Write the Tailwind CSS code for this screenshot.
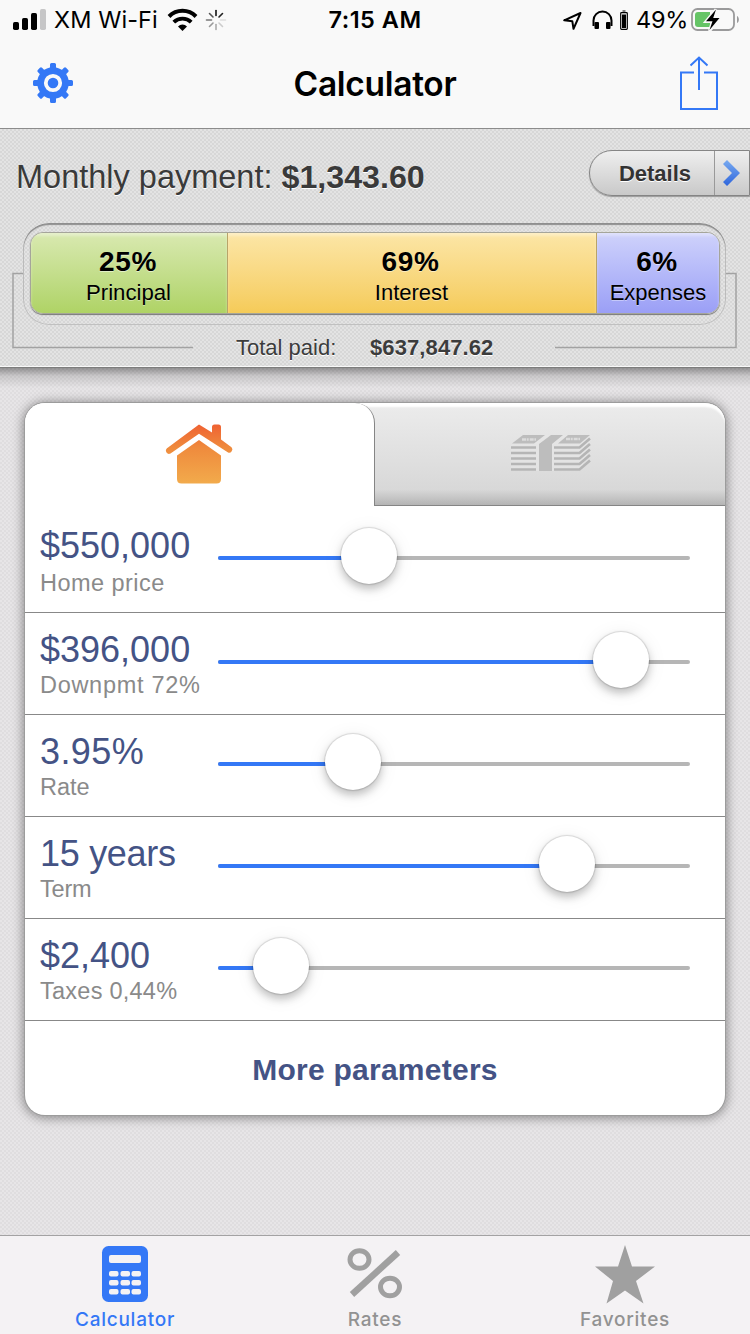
<!DOCTYPE html>
<html lang="en">
<head>
<meta charset="utf-8">
<title>Calculator</title>
<script src="https://cdn.jsdelivr.net/npm/@tailwindcss/browser@4"></script>
</head>
<body class="flex h-[1334px] w-[750px] flex-col overflow-hidden bg-[#e3e1e3] font-['Liberation_Sans',Arial,sans-serif] whitespace-nowrap">

<header class="h-[129px] shrink-0 border-b border-[#8c8c8c] bg-[#f9f9f9] font-[Inter,sans-serif] text-black">
  <div class="grid h-10 grid-cols-[1fr_auto_1fr] items-center">
    <div class="flex h-10 items-center pl-[13px]">
      <svg class="h-10 w-[34px]" viewBox="13 0 34 40"><rect x="13" y="22" width="6" height="8" rx="1.7"/><rect x="22" y="18" width="6" height="12" rx="1.7"/><rect x="31" y="13" width="6" height="17" rx="1.7"/><rect x="40" y="9" width="6" height="21" rx="1.7" fill="#c6c6c7"/></svg>
      <span class="ml-[7px] w-[105px] text-[23.500px] leading-10 tracking-[0.100px]">XM Wi-Fi</span>
      <svg class="ml-2 h-10 w-[32px]" viewBox="167 0 32 40" fill="none" stroke="#000"><path d="M169 16.500a19 19 0 0 1 27 0" stroke-width="4"/><path d="M173.800 22.200a12.200 12.200 0 0 1 17.400 0" stroke-width="3.800"/><path d="M182.500 31l-4.500-4.600a6.400 6.400 0 0 1 9 0z" fill="#000" stroke="none"/></svg>
      <svg class="ml-[6px] h-10 w-[22px]" viewBox="205 0 22 40" fill="none" stroke-width="1.600" stroke-linecap="round"><path d="M216 15.500v-5" stroke="#111"/><path d="M219 17l3.500-3.500" stroke="#222"/><path d="M220.500 20h5" stroke="#ddd"/><path d="M219 23l3.500 3.500" stroke="#ccc"/><path d="M216 24.500v5" stroke="#aaa"/><path d="M213 23l-3.500 3.500" stroke="#999"/><path d="M211.500 20h-5" stroke="#777"/><path d="M213 17l-3.500-3.500" stroke="#555"/></svg>
    </div>
    <span class="text-[23.500px] leading-10 font-semibold tracking-[0.500px]">7:15 AM</span>
    <div class="flex h-10 items-center justify-end pr-[10px]">
      <svg class="h-10 w-[70px]" viewBox="562 0 70 40"><path d="M564.200 20.300L580.500 13l-7 15.800-1.200-7.600z" fill="none" stroke="#000" stroke-width="2" stroke-linejoin="round"/><path d="M593.500 26v-5.500a9 9 0 0 1 18 0V26" fill="none" stroke="#000" stroke-width="2"/><rect x="594.500" y="22" width="4.500" height="7" rx="1"/><rect x="606" y="22" width="4.500" height="7" rx="1"/><rect x="620.700" y="12.700" width="6.600" height="16.600" rx=".8" fill="none" stroke="#000" stroke-width="1.200"/><path d="M622 14.500h4v13.500h-4zM622.500 10.500h3v1h-3z"/></svg>
      <span class="ml-1 w-[51px] text-[23.500px] leading-10 tracking-[-0.200px]">49%</span>
      <svg class="ml-[3px] h-10 w-[50px]" viewBox="690 0 50 40"><rect x="692" y="9" width="42" height="21" rx="5.500" fill="none" stroke="#9a9a9b" stroke-width="1.800"/><path d="M737 16v7c2.500-1 2.500-6 0-7z" fill="#9a9a9b"/><path d="M698 12h12v15h-12a3 3 0 0 1-3-3v-9a3 3 0 0 1 3-3z" fill="#65c466"/><path d="M716 9.500L706 21.500h6.500L709.500 31 720 18h-6.500z" stroke="#f9f9f9" stroke-width="3"/><path d="M716 9.500L706 21.200h6.500L709.500 30 719.500 18h-6.300z"/></svg>
    </div>
  </div>
  <div class="grid h-[88px] grid-cols-[1fr_auto_1fr] items-center">
    <svg class="ml-8 h-[88px] w-[42px]" viewBox="32 40 42 88"><g fill="#3478f6"><circle cx="53" cy="83" r="15.800"/><g id="teeth"><path id="tooth" d="M50 69v-4.500q0-1.500 1.500-1.500h3q1.500 0 1.500 1.500v4.500l2.500 2h-11z"/><use href="#tooth" transform="rotate(45 53 83)"/><use href="#tooth" transform="rotate(90 53 83)"/><use href="#tooth" transform="rotate(135 53 83)"/></g><use href="#teeth" transform="rotate(180 53 83)"/></g><circle cx="53" cy="83" r="7.200" fill="none" stroke="#f9f9f9" stroke-width="3.800"/></svg>
    <h1 class="text-[33.500px] leading-[88px] font-semibold tracking-[-0.300px]">Calculator</h1>
    <svg class="ml-auto mr-[30px] h-[88px] w-[42px]" viewBox="678 40 42 88" fill="none" stroke="#3478f6" stroke-width="2"><path d="M694 72.500h-13V109h36V72.500h-13M699 90V58m-8.500 7.500L699 57.500l8.500 8"/></svg>
  </div>
</header>

<section class="relative h-[239px] shrink-0 border-b border-[#7d7d7d] bg-[#dedede] bg-[repeating-conic-gradient(#d7d7d7_0_25%,#e3e3e3_0_50%)] bg-[length:4px_4px] shadow-[inset_0_-1px_0_#f8f8f8]">
  <svg class="absolute top-[143px] left-[12px] h-[78px] w-[726px]" viewBox="12 272 726 78" fill="none" stroke="#a2a2a2" stroke-width="1.500"><path d="M24 273.500H13v74h180M725 273.500h11v74H555"/></svg>
  <div class="flex h-[94px] items-center justify-between pl-4">
    <p class="pt-px text-[32.500px] leading-[40px] text-[#3a3a3a] [text-shadow:0_1px_0_#fff]">Monthly payment: <b class="text-[32.200px]">$1,343.60</b></p>
    <div class="mt-[-6px] flex h-[46px] w-[161px] rounded-l-full border border-[#858585] bg-linear-to-b from-[#efefef] to-[#c9c9c9] shadow-[0_1px_1px_#999]">
      <span class="flex w-[125px] items-center justify-center border-r border-[#999] pl-[6px] text-[22px] font-bold text-[#333] [text-shadow:0_1px_0_#fff]">Details</span>
      <svg class="ml-[7px] mt-[8px] h-[28px] w-[20px]" viewBox="0 0 20 28"><defs><linearGradient id="arrow" x2="0" y2="1"><stop stop-color="#78aaf0"/><stop offset="1" stop-color="#2f66dc"/></linearGradient></defs><path d="M5 1l13 13L5 27l-4-4 9-9-9-9z" fill="url(#arrow)"/></svg>
    </div>
  </div>
  <div class="relative ml-[23px] flex h-[102px] w-[703px] rounded-[26px] bg-[#dedede] bg-[repeating-conic-gradient(#d7d7d7_0_25%,#e3e3e3_0_50%)] bg-[length:4px_4px] px-[7px] pt-[9px] pr-[6px] shadow-[inset_0_2px_1px_#8f8f8f,inset_0_0_0_1px_#c0c0c0]">
    <div class="flex h-[82px] w-full overflow-hidden rounded-[13px] border border-[#a5a59a] text-center text-black shadow-[0_1px_1px_#777]">
      <div class="w-[196px] shrink-0 bg-linear-to-b from-[#d9e9b0] to-[#afd365] pt-[14px] shadow-[inset_0_3px_3px_rgba(255,255,255,.35)]"><b class="block pr-0.5 text-[28px] leading-[30px] tracking-[0.600px] [text-shadow:0_1px_0_#ffffff80]">25%</b><span class="block pr-px text-[22.200px] leading-[31px] [text-shadow:0_1px_0_#ffffff60]">Principal</span></div>
      <div class="w-[370px] shrink-0 border-x border-[#b9a468] bg-linear-to-b from-[#fce6a6] to-[#f5cb58] pt-[14px] shadow-[inset_0_3px_3px_rgba(255,255,255,.35)]"><b class="block pr-[3px] text-[28px] leading-[30px] tracking-[0.600px] [text-shadow:0_1px_0_#ffffff80]">69%</b><span class="block pr-px text-[22px] leading-[31px] [text-shadow:0_1px_0_#ffffff60]">Interest</span></div>
      <div class="flex-1 bg-linear-to-b from-[#cfd2fb] to-[#9b9ff6] pt-[14px] shadow-[inset_0_3px_3px_rgba(255,255,255,.35)]"><b class="block pr-0.5 text-[28px] leading-[30px] tracking-[0.600px] [text-shadow:0_1px_0_#ffffff80]">6%</b><span class="block text-[22px] leading-[31px] [text-shadow:0_1px_0_#ffffff60]">Expenses</span></div>
    </div>
  </div>
  <div class="flex h-[42px] items-center pt-[3px] pl-[236px] text-[22px] leading-[42px] text-[#3c3c3c] [text-shadow:0_1px_0_#fff]"><span class="w-[134px]">Total paid:</span><b class="tracking-[0.100px]">$637,847.62</b></div>
</section>

<main class="h-[867px] shrink-0 bg-[#e2e0e2] bg-[linear-gradient(to_bottom,rgba(0,0,0,.36),rgba(0,0,0,.12)_8px,transparent_20px),repeating-conic-gradient(#dfdddf_0_25%,#e7e5e7_0_50%)] bg-[length:100%_100%,4px_4px] px-[25px] pt-[35px]">
  <div class="h-[712px] rounded-[20px] bg-white shadow-[0_0_0_1px_#9c9c9c,0_1px_11px_2px_rgba(0,0,0,.4)]">
    <div class="flex h-[103px] overflow-hidden rounded-t-[20px] bg-linear-to-b from-[#ececec] via-[#dedede] via-60% to-[#d4d4d4]">
      <div class="z-10 flex w-[350px] justify-center rounded-tr-[20px] border-r border-[#858585] bg-white">
        <svg class="mt-[20px] mr-px h-[62px] w-[70px]" viewBox="164 423 70 62"><defs><linearGradient id="home" gradientUnits="userSpaceOnUse" x1="0" y1="424" x2="0" y2="484"><stop stop-color="#ef6132"/><stop offset=".4" stop-color="#ef8b3d"/><stop offset="1" stop-color="#f2ab4c"/></linearGradient></defs><g fill="url(#home)"><path d="M199 424.500l13 8V427q0-2.500 2.500-2.500h4q2.500 0 2.500 2.500v12.500l10.500 7.800q1.800 1.800.2 4-1.700 2.500-4 1L199 433.800 170.500 453.500q-2.500 1.200-4-1-1.500-2.500.5-4.300z"/><path d="M199 440l22 15.500V479q0 4.500-4.500 4.500h-35q-4.500 0-4.500-4.500v-23.500z"/></g></svg>
      </div>
      <div class="-ml-[20px] flex flex-1 justify-center rounded-tr-[20px] border-b border-[#858585] bg-linear-to-t from-black/15 to-transparent to-15% pl-[22px] shadow-[inset_0_5px_2px_-1px_#fff]">
        <svg class="mt-[31px] h-[40px] w-[82px]" viewBox="510 434 82 40"><path d="M511 445l12-10.500h67v13.500l-10 23h-69z" fill="#e6e6e6" opacity=".6"/><g fill="#bdbdbd"><path d="M523 435h22l-11 8.500h-22zM551 435h12l-11 9v27h-13v-27zM568 435h22l-10 8.500h-22z"/></g><g fill="none" stroke="#b5b5b5" stroke-width="2.600"><path id="bill" d="M511 447.500h25M554 447.500h25.500l10.500-9"/><use href="#bill" y="5.500"/><use href="#bill" y="11"/><use href="#bill" y="16.500"/><use href="#bill" y="22"/></g><path d="M522 439.500h14M566 439h14" stroke="#dcdcdc" stroke-width="2.500" stroke-dasharray="4 .7 2 1"/></svg>
      </div>
    </div>

    <div class="flex h-[107px] border-b border-[#888] pl-[15px]">
      <div class="w-[178px] pt-[19px]"><p class="text-[36px] leading-[42px] text-[#445385]">$550,000</p><p class="text-[23.500px] leading-[32px] tracking-[0.450px] text-[#8a8a8a]">Home price</p></div>
      <div class="relative mt-[50px] h-1 w-[472px] rounded-full bg-[#b6b6b6]"><div class="h-1 w-[150px] rounded-full bg-[#3478f6]"></div><i class="absolute top-[-28px] left-[123px] size-14 rounded-full bg-white shadow-[0_0_1px_1px_rgba(0,0,0,.12),0_5px_8px_rgba(0,0,0,.22),0_3px_20px_rgba(0,0,0,.08)]"></i></div>
    </div>
    <div class="flex h-[102px] border-b border-[#888] pl-[15px]">
      <div class="w-[178px] pt-[16px]"><p class="text-[36px] leading-[42px] text-[#445385]">$396,000</p><p class="text-[23.500px] leading-[28px] tracking-[0.700px] text-[#8a8a8a]">Downpmt 72%</p></div>
      <div class="relative mt-[47px] h-1 w-[472px] rounded-full bg-[#b6b6b6]"><div class="h-1 w-[402px] rounded-full bg-[#3478f6]"></div><i class="absolute top-[-28px] left-[375px] size-14 rounded-full bg-white shadow-[0_0_1px_1px_rgba(0,0,0,.12),0_5px_8px_rgba(0,0,0,.22),0_3px_20px_rgba(0,0,0,.08)]"></i></div>
    </div>
    <div class="flex h-[102px] border-b border-[#888] pl-[15px]">
      <div class="w-[178px] pt-[16px]"><p class="text-[36px] leading-[42px] tracking-[0.400px] text-[#445385]">3.95%</p><p class="text-[23.500px] leading-[28px] text-[#8a8a8a]">Rate</p></div>
      <div class="relative mt-[47px] h-1 w-[472px] rounded-full bg-[#b6b6b6]"><div class="h-1 w-[134px] rounded-full bg-[#3478f6]"></div><i class="absolute top-[-28px] left-[107px] size-14 rounded-full bg-white shadow-[0_0_1px_1px_rgba(0,0,0,.12),0_5px_8px_rgba(0,0,0,.22),0_3px_20px_rgba(0,0,0,.08)]"></i></div>
    </div>
    <div class="flex h-[102px] border-b border-[#888] pl-[15px]">
      <div class="w-[178px] pt-[16px]"><p class="text-[36px] leading-[42px] tracking-[-0.300px] text-[#445385]">15 years</p><p class="text-[23.500px] leading-[28px] tracking-[-0.200px] text-[#8a8a8a]">Term</p></div>
      <div class="relative mt-[47px] h-1 w-[472px] rounded-full bg-[#b6b6b6]"><div class="h-1 w-[348px] rounded-full bg-[#3478f6]"></div><i class="absolute top-[-28px] left-[321px] size-14 rounded-full bg-white shadow-[0_0_1px_1px_rgba(0,0,0,.12),0_5px_8px_rgba(0,0,0,.22),0_3px_20px_rgba(0,0,0,.08)]"></i></div>
    </div>
    <div class="flex h-[102px] border-b border-[#888] pl-[15px]">
      <div class="w-[178px] pt-[16px]"><p class="text-[36px] leading-[42px] text-[#445385]">$2,400</p><p class="text-[23.500px] leading-[28px] tracking-[0.250px] text-[#8a8a8a]">Taxes 0,44%</p></div>
      <div class="relative mt-[47px] h-1 w-[472px] rounded-full bg-[#b6b6b6]"><div class="h-1 w-[62px] rounded-full bg-[#3478f6]"></div><i class="absolute top-[-28px] left-[35px] size-14 rounded-full bg-white shadow-[0_0_1px_1px_rgba(0,0,0,.12),0_5px_8px_rgba(0,0,0,.22),0_3px_20px_rgba(0,0,0,.08)]"></i></div>
    </div>
    <p class="pt-[27px] text-center text-[30px] leading-[44px] font-bold tracking-[0.250px] text-[#445385]">More parameters</p>
  </div>
</main>

<nav class="grid h-[99px] shrink-0 grid-cols-3 border-t border-[#a3a2a3] bg-[#f4f2f4] text-center font-[Inter,sans-serif] text-[19px] font-medium tracking-[0.750px] text-[#929292]">
  <div class="flex flex-col items-center text-[#3478f6]">
    <svg class="mt-[9px] h-[60px] w-[60px]" viewBox="95 1245 60 60"><rect x="102" y="1246" width="46" height="56" rx="6.500" fill="#3478f6"/><g fill="#f4f2f4"><rect x="109" y="1255" width="32" height="8" rx="2"/><g id="keys"><rect x="109" y="1271" width="9.500" height="5.500" rx="2"/><rect x="120.500" y="1271" width="9.500" height="5.500" rx="2"/><rect x="131.500" y="1271" width="9.500" height="5.500" rx="2"/></g><use href="#keys" y="9"/><use href="#keys" y="18"/></g></svg>
    <span class="pt-px leading-7">Calculator</span>
  </div>
  <div class="flex flex-col items-center">
    <svg class="mt-[9px] h-[60px] w-[60px]" viewBox="345 1245 60 60" fill="none" stroke="#a0a0a0"><ellipse cx="359.500" cy="1259.500" rx="9.500" ry="8.800" stroke-width="5"/><ellipse cx="390" cy="1287" rx="9.500" ry="8.800" stroke-width="5"/><path d="M352 1294.500l46-42" stroke-width="6.500"/></svg>
    <span class="pt-px leading-7">Rates</span>
  </div>
  <div class="flex flex-col items-center">
    <svg class="mt-[9px] h-[60px] w-[60px]" viewBox="595 1244 60 60"><path d="M625 1244l7 21.500h23l-19 14.500 7.500 22.500-18.500-13-18.500 13 6.500-22.500-18-14.500h23z" fill="#a0a0a0"/></svg>
    <span class="pt-px leading-7">Favorites</span>
  </div>
</nav>
</body>
</html>
